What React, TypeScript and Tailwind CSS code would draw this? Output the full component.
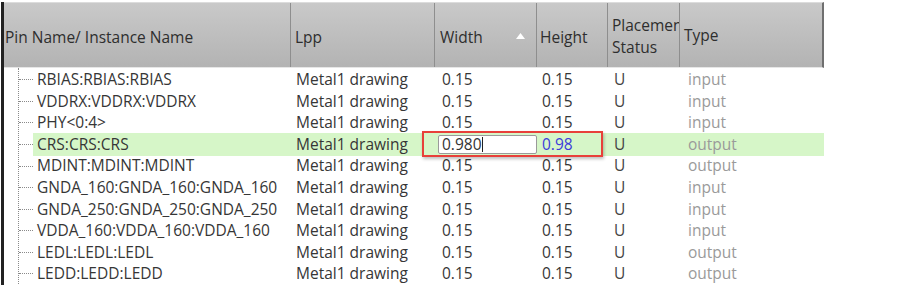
const rows = [
  { name: "RBIAS:RBIAS:RBIAS", type: "input" },
  { name: "VDDRX:VDDRX:VDDRX", type: "input" },
  { name: "PHY<0:4>", type: "input" },
  { name: "CRS:CRS:CRS", type: "output", editing: true },
  { name: "MDINT:MDINT:MDINT", type: "output" },
  { name: "GNDA_160:GNDA_160:GNDA_160", type: "input" },
  { name: "GNDA_250:GNDA_250:GNDA_250", type: "input" },
  { name: "VDDA_160:VDDA_160:VDDA_160", type: "input" },
  { name: "LEDL:LEDL:LEDL", type: "output" },
  { name: "LEDD:LEDD:LEDD", type: "output" },
];

const cols = "grid grid-cols-[287px_144px_102px_71px_72px_144px]";

function HeaderCell({ children, last, pad = "pl-[4px]" }: { children: React.ReactNode; last?: boolean; pad?: string }) {
  return (
    <div className={`flex items-center overflow-hidden whitespace-nowrap ${pad} ${last ? "" : "border-r border-[#8e8e8e]"}`}>
      {children}
    </div>
  );
}

export default function App() {
  return (
    <div className="w-[913px] h-[302px] bg-white overflow-hidden text-[#363636]" style={{ fontFamily: '"Open Sans", "Noto Sans", sans-serif' }}>
      <div className="ml-[1px] mt-[2px] w-[823px] h-[283px] border-l-[3px] border-[#222] relative">
        {/* header */}
        <div className={`${cols} h-[66px] border-t border-[#dcdcdc] border-b border-b-[#e6e6e6] border-r-2 border-r-[#6f6f6f] bg-gradient-to-b from-[#c9c9c9] to-[#b3b3b3] text-[15.5px] text-[#2e2e2e]`}>
          <HeaderCell pad="pl-[1px]">
            <span className="mt-[5px]">Pin Name/ Instance Name</span>
          </HeaderCell>
          <HeaderCell>
            <span className="mt-[5px]">Lpp</span>
          </HeaderCell>
          <HeaderCell pad="pl-[5px]">
            <div className="flex w-full items-center justify-between pr-[11px] mt-[5px]">
              <span>Width</span>
              <svg width="9" height="6" viewBox="0 0 9 6" className="-mt-[4px]">
                <path d="M4.5 0 L9 6 L0 6 Z" fill="#ffffff" />
              </svg>
            </div>
          </HeaderCell>
          <HeaderCell pad="pl-[3px]">
            <span className="mt-[5px]">Height</span>
          </HeaderCell>
          <HeaderCell pad="pl-[4px]">
            <div className="leading-[22px] mt-[1px]">
              <div>Placement</div>
              <div>Status</div>
            </div>
          </HeaderCell>
          <HeaderCell last pad="pl-[4px]">
            <span className="mt-[2px]">Type</span>
          </HeaderCell>
        </div>

        {/* body */}
        <div className="relative text-[15.5px]">
          <div className="absolute left-[14px] top-0 h-[216px] border-l border-dotted border-[#8a8a8a]" />
          {rows.map((r) => (
            <div key={r.name} className={`${cols} h-[21.6px] items-center`}>
              <div className="flex items-center h-full">
                <span className="ml-[15px] w-[14px] border-t border-dotted border-[#8a8a8a]" />
                <span className={`h-full flex items-center pl-[4px] flex-1 ${r.editing ? "bg-[#d6f6c8]" : ""}`}>{r.name}</span>
              </div>
              <div className={`h-full flex items-center pl-[5px] ${r.editing ? "bg-[#d6f6c8]" : ""}`}>Metal1 drawing</div>
              {r.editing ? (
                <div className="h-full flex items-center bg-[#d6f6c8] pl-[3px]">
                  <div className="w-[100px] h-[19px] bg-white border border-[#9a9a9a] rounded-[2px] flex items-center pl-[3px] text-[#333]">
                    0.980<span className="w-px h-[15px] bg-[#222]" />
                  </div>
                </div>
              ) : (
                <div className="h-full flex items-center pl-[7px]">0.15</div>
              )}
              <div className={`h-full flex items-center pl-[5px] ${r.editing ? "bg-[#d6f6c8] text-[#3b3bdc]" : ""}`}>
                {r.editing ? "0.98" : "0.15"}
              </div>
              <div className={`h-full flex items-center pl-[6px] text-[#444] ${r.editing ? "bg-[#d6f6c8]" : ""}`}>U</div>
              <div className={`h-full flex items-center pl-[8px] text-[#9a9a9a] ${r.editing ? "bg-[#d6f6c8]" : ""}`}>{r.type}</div>
            </div>
          ))}
          {/* red annotation box over the edited cells */}
          <div className="absolute left-[418px] top-[63px] w-[181px] h-[26px] border-2 border-[#e8403a] shadow-[1px_2px_3px_rgba(0,0,0,0.25)]" />
        </div>
      </div>
    </div>
  );
}
